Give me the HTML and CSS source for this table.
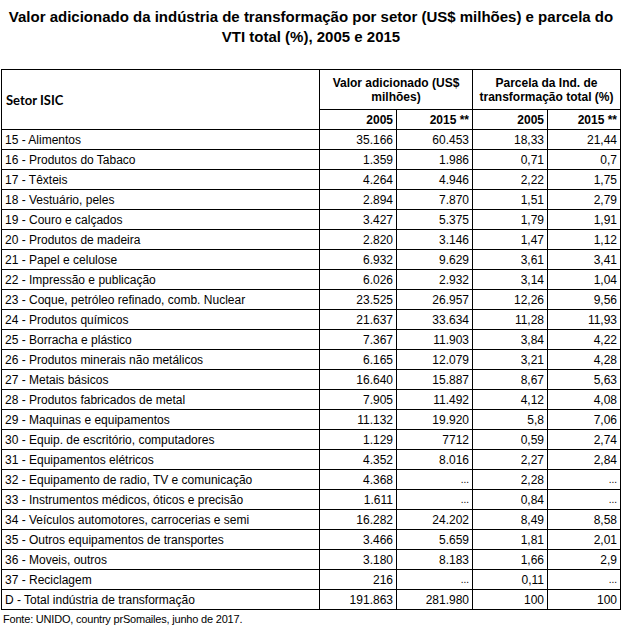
FILE: index.html
```html
<!DOCTYPE html>
<html lang="pt">
<head>
<meta charset="utf-8">
<link rel="stylesheet" href="styles.css">
</head>
<body>
<h1 class="title">Valor adicionado da indústria de transformação por setor (US$ milhões) e parcela do VTI total (%), 2005 e 2015</h1>
<table class="data">
<colgroup>
<col class="c-sector"><col class="c-a"><col class="c-b"><col class="c-c"><col class="c-d">
</colgroup>
<thead>
<tr class="h1">
<th rowspan="2" class="sector-head">Setor ISIC</th>
<th colspan="2">Valor adicionado (US$<br>milhões)</th>
<th colspan="2">Parcela da Ind. de<br>transformação total (%)</th>
</tr>
<tr class="h2">
<th class="num">2005</th><th class="num">2015 **</th><th class="num">2005</th><th class="num">2015 **</th>
</tr>
</thead>
<tbody>
<tr><td>15 - Alimentos</td><td>35.166</td><td>60.453</td><td>18,33</td><td>21,44</td></tr>
<tr><td>16 - Produtos do Tabaco</td><td>1.359</td><td>1.986</td><td>0,71</td><td>0,7</td></tr>
<tr><td>17 - Têxteis</td><td>4.264</td><td>4.946</td><td>2,22</td><td>1,75</td></tr>
<tr><td>18 - Vestuário, peles</td><td>2.894</td><td>7.870</td><td>1,51</td><td>2,79</td></tr>
<tr><td>19 - Couro e calçados</td><td>3.427</td><td>5.375</td><td>1,79</td><td>1,91</td></tr>
<tr><td>20 - Produtos de madeira</td><td>2.820</td><td>3.146</td><td>1,47</td><td>1,12</td></tr>
<tr><td>21 - Papel e celulose</td><td>6.932</td><td>9.629</td><td>3,61</td><td>3,41</td></tr>
<tr><td>22 - Impressão e publicação</td><td>6.026</td><td>2.932</td><td>3,14</td><td>1,04</td></tr>
<tr><td>23 - Coque, petróleo refinado, comb. Nuclear</td><td>23.525</td><td>26.957</td><td>12,26</td><td>9,56</td></tr>
<tr><td>24 - Produtos químicos</td><td>21.637</td><td>33.634</td><td>11,28</td><td>11,93</td></tr>
<tr><td>25 - Borracha e plástico</td><td>7.367</td><td>11.903</td><td>3,84</td><td>4,22</td></tr>
<tr><td>26 - Produtos minerais não metálicos</td><td>6.165</td><td>12.079</td><td>3,21</td><td>4,28</td></tr>
<tr><td>27 - Metais básicos</td><td>16.640</td><td>15.887</td><td>8,67</td><td>5,63</td></tr>
<tr><td>28 - Produtos fabricados de metal</td><td>7.905</td><td>11.492</td><td>4,12</td><td>4,08</td></tr>
<tr><td>29 - Maquinas e equipamentos</td><td>11.132</td><td>19.920</td><td>5,8</td><td>7,06</td></tr>
<tr><td>30 - Equip. de escritório, computadores</td><td>1.129</td><td>7712</td><td>0,59</td><td>2,74</td></tr>
<tr><td>31 - Equipamentos elétricos</td><td>4.352</td><td>8.016</td><td>2,27</td><td>2,84</td></tr>
<tr><td>32 - Equipamento de radio, TV e comunicação</td><td>4.368</td><td class="dots">...</td><td>2,28</td><td class="dots">...</td></tr>
<tr><td>33 - Instrumentos médicos, óticos e precisão</td><td>1.611</td><td class="dots">...</td><td>0,84</td><td class="dots">...</td></tr>
<tr><td>34 - Veículos automotores, carrocerias e semi</td><td>16.282</td><td>24.202</td><td>8,49</td><td>8,58</td></tr>
<tr><td>35 - Outros equipamentos de transportes</td><td>3.466</td><td>5.659</td><td>1,81</td><td>2,01</td></tr>
<tr><td>36 - Moveis, outros</td><td>3.180</td><td>8.183</td><td>1,66</td><td>2,9</td></tr>
<tr><td>37 - Reciclagem</td><td>216</td><td class="dots">...</td><td>0,11</td><td class="dots">...</td></tr>
<tr><td>D - Total indústria de transformação</td><td>191.863</td><td>281.980</td><td>100</td><td>100</td></tr>
</tbody>
</table>
<p class="source">Fonte: UNIDO, country prSomailes, junho de 2017.</p>
</body>
</html>
```
FILE: styles.css
```css
html, body {
  margin: 0;
  padding: 0;
  background: #ffffff;
  color: #000000;
  font-family: "Liberation Sans", Arial, sans-serif;
}

.title {
  margin: 0;
  padding: 7px 8px 0 8px;
  width: 622px;
  text-align: center;
  font-size: 15px;
  font-weight: bold;
  line-height: 20px;
  box-sizing: border-box;
}

.data {
  margin: 22px 0 0 1px;
  border-collapse: collapse;
  table-layout: fixed;
  width: 619px;
  font-size: 12px;
}

.c-sector { width: 318px; }
.c-a { width: 77px; }
.c-b { width: 76px; }
.c-c { width: 75px; }
.c-d { width: 73px; }

.data th,
.data td {
  border: 1px solid #000000;
  padding: 0 3px 0 3px;
  line-height: 14px;
  white-space: nowrap;
  overflow: hidden;
}

.data td {
  height: 19px;
  text-align: right;
  vertical-align: middle;
}

.data td:first-child {
  text-align: left;
  padding-left: 3px;
}

.data td.dots {
  font-size: 10px;
}

.data th {
  font-weight: bold;
  text-align: center;
  vertical-align: middle;
}

.h1 th {
  height: 39px;
}

.h2 th {
  height: 19px;
}

.data th.num {
  text-align: right;
}

.data th.sector-head {
  text-align: left;
  font-family: Lato, "Liberation Sans", sans-serif;
  font-size: 13px;
  padding-left: 4px;
}

.source {
  margin: 2px 0 0 3px;
  font-size: 11px;
  line-height: 14px;
  letter-spacing: -0.2px;
  font-family: "Liberation Sans Narrow", "Arial Narrow", "Liberation Sans", sans-serif;
}
```
